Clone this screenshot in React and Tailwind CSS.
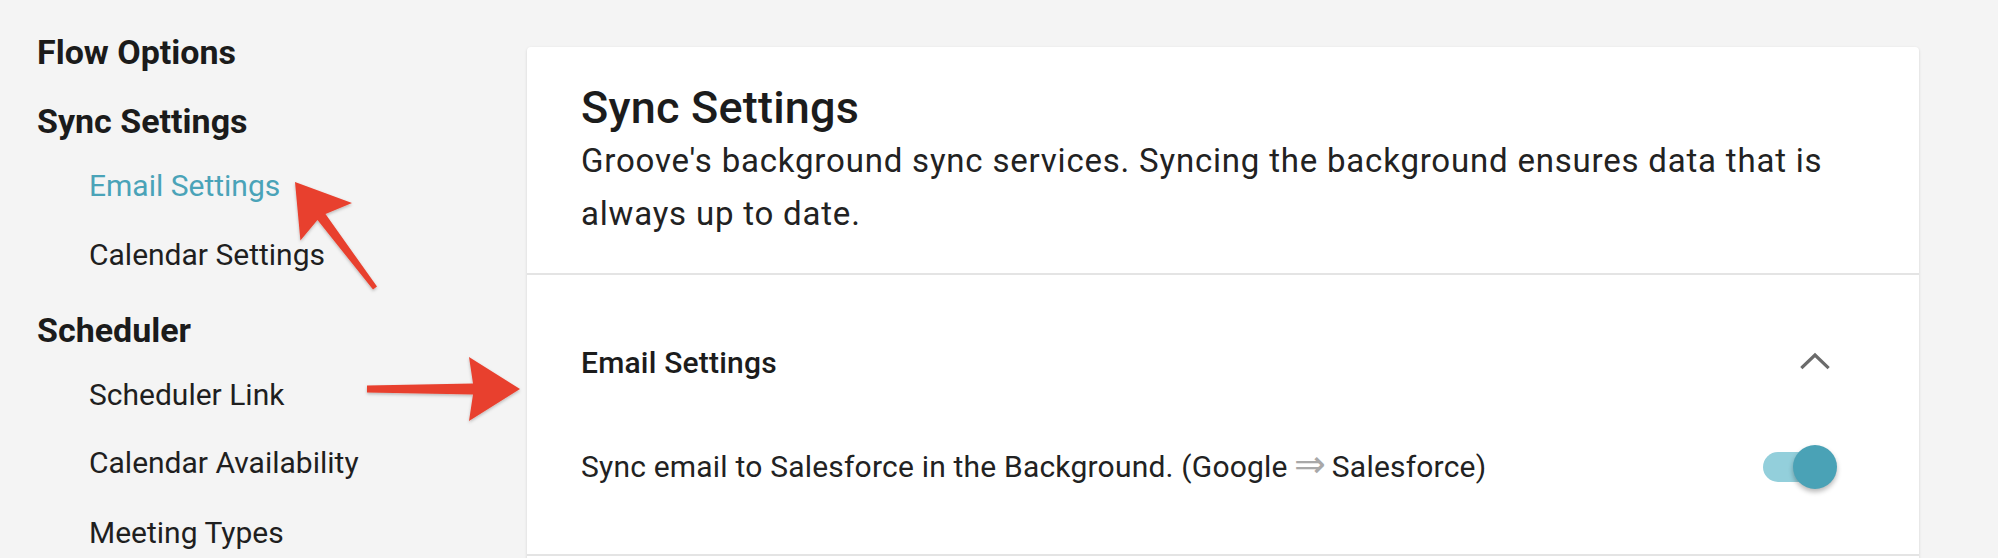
import React from "react";

function Heading({ children, className = "" }) {
  return (
    <div className={`h-[40px] leading-[40px] text-[34px] font-bold text-[#1b1b1b] whitespace-nowrap ${className}`}>
      {children}
    </div>
  );
}

function SubItem({ children, active = false, className = "" }) {
  return (
    <div
      className={`h-[40px] leading-[40px] text-[30px] pl-[52px] whitespace-nowrap ${
        active ? "text-[#4aa3b8]" : "text-[#1f1f1f]"
      } ${className}`}
    >
      {children}
    </div>
  );
}

function Chevron() {
  return (
    <svg width="44" height="20" viewBox="0 0 44 20" className="-mt-[4px]">
      <polyline points="9.5,16 22,4 34.5,16" fill="none" stroke="#6b6b6b" strokeWidth="3.2" strokeLinecap="square" />
    </svg>
  );
}

function Toggle() {
  return (
    <div className="relative w-[74px] h-[44px] flex items-center shrink-0">
      <div className="w-[70px] h-[30px] rounded-full bg-[#93cfdb]" />
      <div className="absolute right-0 top-0 w-[44px] h-[44px] rounded-full bg-[#4aa2b6] shadow-[0_3px_5px_rgba(0,0,0,0.28)]" />
    </div>
  );
}

function Arrows() {
  return (
    <svg
      className="absolute inset-0 pointer-events-none"
      width="1998"
      height="558"
      viewBox="0 0 1998 558"
    >
      <defs>
        <filter id="sh" x="-20%" y="-20%" width="140%" height="140%">
          <feDropShadow dx="0" dy="1.5" stdDeviation="1.5" floodColor="#000" floodOpacity="0.25" />
        </filter>
      </defs>
      <polygon
        filter="url(#sh)"
        fill="#e8412f"
        points="295,182 352,203 325.5,214 377,286.6 373,289.6 317.5,220 300.4,240.6"
      />
      <polygon
        filter="url(#sh)"
        fill="#e8412f"
        points="520,389 469,357 473,383.5 367,385.5 367,392.5 473,394.5 469,421"
      />
    </svg>
  );
}

export default function App() {
  return (
    <div className="relative w-[1998px] h-[558px] overflow-hidden bg-[#f4f4f4] flex font-['Roboto','Liberation_Sans',sans-serif]">
      <aside className="w-[527px] shrink-0 pl-[37px] pt-[32px] flex flex-col">
        <Heading>Flow Options</Heading>
        <Heading className="mt-[29px]">Sync Settings</Heading>
        <SubItem active className="mt-[25px]">Email Settings</SubItem>
        <SubItem className="mt-[29px]">Calendar Settings</SubItem>
        <Heading className="mt-[35px]">Scheduler</Heading>
        <SubItem className="mt-[25px]">Scheduler Link</SubItem>
        <SubItem className="mt-[28px]">Calendar Availability</SubItem>
        <SubItem className="mt-[30px]">Meeting Types</SubItem>
      </aside>

      <main className="mt-[47px] w-[1392px] shrink-0 self-start bg-white rounded-[4px] shadow-[0_1px_3px_rgba(0,0,0,0.14)]">
        <section className="px-[54px] pt-[35px] pb-[33px] border-b-2 border-[#e4e4e4]">
          <h1 className="text-[45px] leading-[52px] font-medium tracking-[0.2px] text-[#1c1c1c]">Sync Settings</h1>
          <p className="text-[33px] leading-[53px] tracking-[0.8px] text-[#222222]">
            Groove's background sync services. Syncing the background ensures data that is
            <br />
            always up to date.
          </p>
        </section>

        <section className="pl-[54px] pr-[82px] pt-[68px] pb-[67px] border-b-2 border-[#e4e4e4]">
          <div className="h-[40px] flex items-center justify-between">
            <span className="text-[30px] leading-[40px] font-medium tracking-[0.2px] text-[#1c1c1c]">Email Settings</span>
            <Chevron />
          </div>
          <div className="mt-[64px] h-[40px] flex items-center justify-between">
            <span className="text-[30px] leading-[40px] tracking-[0.2px] text-[#222222] whitespace-nowrap">
              Sync email to Salesforce in the Background. (Google
              <span className="inline-block align-baseline text-[38px] leading-[0] font-extralight text-[#a8a8a8] mx-[6px]">⇒</span>
              Salesforce)
            </span>
            <Toggle />
          </div>
        </section>

        <section className="h-[200px]" />
      </main>

      <Arrows />
    </div>
  );
}
